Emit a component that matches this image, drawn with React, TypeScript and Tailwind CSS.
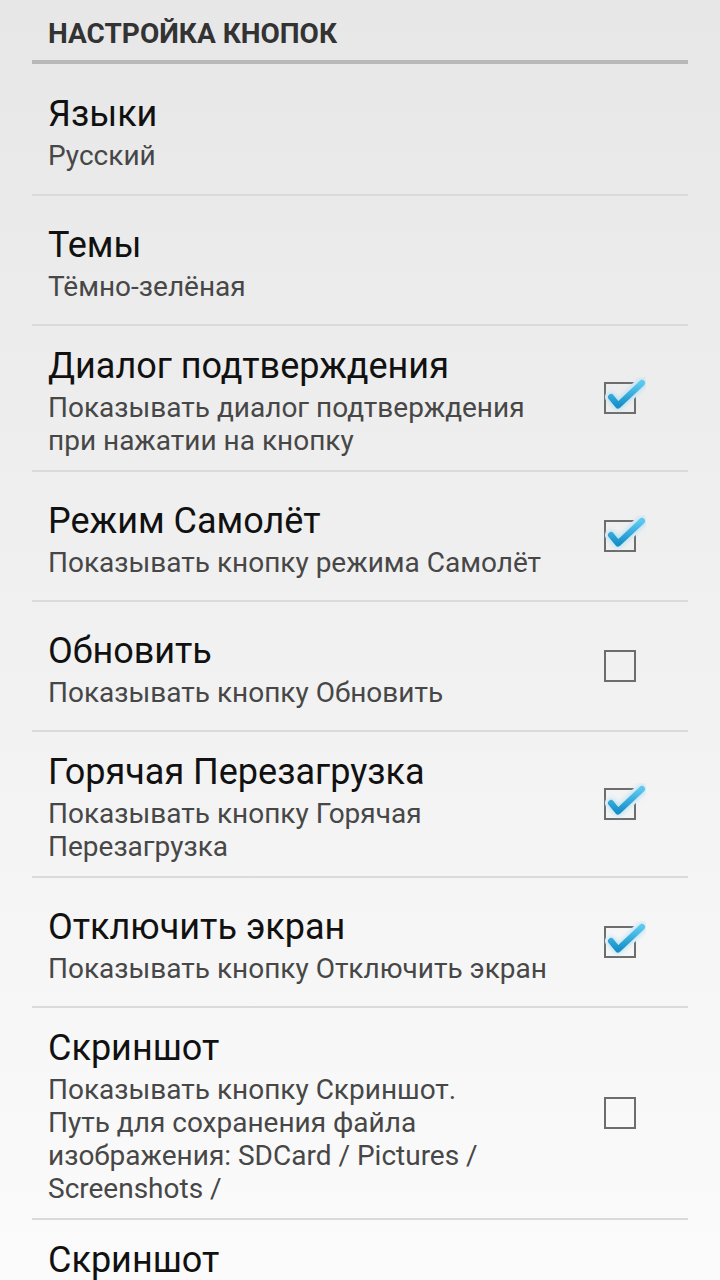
import React, { useId } from "react";

type Item = { title: string; lines: string[]; check?: boolean | null };

const items: Item[] = [
  { title: "Языки", lines: ["Русский"], check: null },
  { title: "Темы", lines: ["Тёмно-зелёная"], check: null },
  { title: "Диалог подтверждения", lines: ["Показывать диалог подтверждения", "при нажатии на кнопку"], check: true },
  { title: "Режим Самолёт", lines: ["Показывать кнопку режима Самолёт"], check: true },
  { title: "Обновить", lines: ["Показывать кнопку Обновить"], check: false },
  { title: "Горячая Перезагрузка", lines: ["Показывать кнопку Горячая", "Перезагрузка"], check: true },
  { title: "Отключить экран", lines: ["Показывать кнопку Отключить экран"], check: true },
  {
    title: "Скриншот",
    lines: ["Показывать кнопку Скриншот.", "Путь для сохранения файла", "изображения: SDCard / Pictures /", "Screenshots /"],
    check: false,
  },
];

function CheckBox({ checked }: { checked: boolean }) {
  const id = useId().replace(/:/g, "");
  const path = "M11 20 L18 28.5 L42 6";
  return (
    <svg width="46" height="42" viewBox="0 0 46 42" className="block">
      <defs>
        <mask id={`m${id}`} maskUnits="userSpaceOnUse" x="0" y="0" width="46" height="42">
          <rect x="0" y="0" width="46" height="42" fill="white" />
          {checked && <path d={path} stroke="black" strokeWidth="12" fill="none" strokeLinecap="round" strokeLinejoin="round" />}
        </mask>
        <linearGradient id={`g${id}`} x1="0" y1="0" x2="0" y2="1">
          <stop offset="0" stopColor="#5cc8f0" />
          <stop offset="1" stopColor="#1790c8" />
        </linearGradient>
        <filter id={`f${id}`} x="-50%" y="-50%" width="200%" height="200%">
          <feGaussianBlur stdDeviation="2.5" />
        </filter>
      </defs>
      <rect x="5" y="6" width="30" height="30" fill="none" stroke="#6d6d6d" strokeWidth="2" mask={`url(#m${id})`} />
      {checked && (
        <>
          <path d={path} stroke="#8fd6f3" strokeOpacity="0.6" strokeWidth="9" fill="none" strokeLinecap="round" strokeLinejoin="round" filter={`url(#f${id})`} />
          <path d={path} stroke={`url(#g${id})`} strokeWidth="6" fill="none" strokeLinecap="round" strokeLinejoin="round" />
        </>
      )}
    </svg>
  );
}

export default function App() {
  return (
    <div className="w-[720px] h-[1280px] overflow-hidden bg-gradient-to-b from-[#e7e7e7] to-[#fbfbfb] font-['Roboto','Noto_Sans',sans-serif]">
      <div className="h-[60px] pt-[16px] pl-[48px]">
        <div className="text-[28px] leading-[36px] font-bold text-[#333333] whitespace-nowrap">НАСТРОЙКА КНОПОК</div>
      </div>
      <div className="mx-[32px] h-[4px] bg-[#b8b8b8]" />
      {items.map((it, i) => (
        <div
          key={i}
          className={`mx-[32px] flex items-center border-b-2 border-[#dadada] ${i === 0 ? "min-h-[132px]" : "min-h-[130px]"}`}
        >
          <div className="flex-1 pl-[16px] pt-[18px] pb-[13px]">
            <div className="text-[36px] leading-[44px] text-[#111111] whitespace-nowrap">{it.title}</div>
            <div className="mt-[3px]">
              {it.lines.map((l, j) => (
                <div key={j} className="text-[28px] leading-[33px] text-[#474747] whitespace-nowrap">
                  {l}
                </div>
              ))}
            </div>
          </div>
          {it.check !== null && it.check !== undefined && (
            <div className="mr-[42px]">
              <CheckBox checked={it.check} />
            </div>
          )}
        </div>
      ))}
      <div className="mx-[32px] pl-[16px] pt-[18px]">
        <div className="text-[36px] leading-[44px] text-[#111111] whitespace-nowrap">Скриншот</div>
      </div>
    </div>
  );
}
